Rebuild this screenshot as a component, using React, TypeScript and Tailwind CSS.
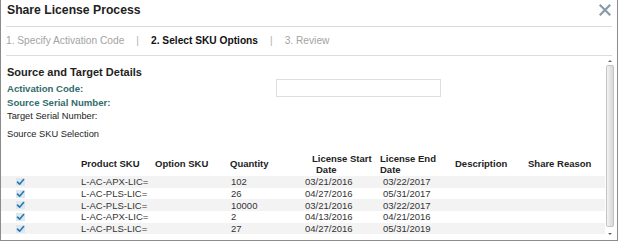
import React from "react";

const rows = [
  { sku: "L-AC-APX-LIC=", qty: "102", start: "03/21/2016", end: "03/22/2017" },
  { sku: "L-AC-PLS-LIC=", qty: "26", start: "04/27/2016", end: "05/31/2017" },
  { sku: "L-AC-PLS-LIC=", qty: "10000", start: "03/21/2016", end: "03/22/2017" },
  { sku: "L-AC-APX-LIC=", qty: "2", start: "04/13/2016", end: "04/21/2016" },
  { sku: "L-AC-PLS-LIC=", qty: "27", start: "04/27/2016", end: "05/31/2019" },
];

function CheckMark() {
  return (
    <svg width="9" height="8" viewBox="0 0 9 8">
      <rect x="0" y="0" width="9" height="8" fill="#dfe6ec" />
      <path d="M1.5 4.2 L3.6 6.2 L7.6 1.6" fill="none" stroke="#1f7ab8" strokeWidth="1.6" strokeLinecap="round" strokeLinejoin="round" />
    </svg>
  );
}

function CloseIcon() {
  return (
    <svg width="12" height="12" viewBox="0 0 12 12">
      <path d="M1.5 1.5 L10.5 10.5 M10.5 1.5 L1.5 10.5" stroke="#8a9aa6" strokeWidth="2.2" strokeLinecap="square" />
    </svg>
  );
}

function Scrollbar() {
  return (
    <div className="flex w-[9px] flex-col items-center pt-[2px] pb-[3px]">
      <div className="flex h-[6px] w-[9px] items-center justify-center">
        <div className="h-0 w-0 border-x-[2px] border-b-[2px] border-x-transparent border-b-[#666]" />
      </div>
      <div className="mt-[1px] flex-1 w-[8px] rounded-[2px] border border-[#c4c4c4] bg-gradient-to-r from-[#f4f4f4] via-[#e4e4e4] to-[#d8d8d8]" />
      <div className="mt-[4px] flex h-[6px] w-[9px] items-center justify-center">
        <div className="h-0 w-0 border-x-[2px] border-t-[2px] border-x-transparent border-t-[#666]" />
      </div>
    </div>
  );
}

export default function App() {
  return (
    <div className="h-[243px] w-[619px] bg-white" style={{ fontFamily: '"Liberation Sans", Arial, sans-serif' }}>
      <div className="flex h-[241px] w-[618px] flex-col border-x border-b border-[#8c8c8c] text-[#222]">
        {/* title */}
        <div className="mx-[5px] flex h-[27px] items-start justify-between border-b border-[#dcdcdc]">
          <div className="pl-[1px] pt-[3px] text-[12.2px] font-bold leading-[15px]">Share License Process</div>
          <div className="pt-[4px] pr-[1px]"><CloseIcon /></div>
        </div>

        {/* steps */}
        <div className="mx-[5px] flex h-[29px] items-center border-b border-[#dcdcdc] text-[10.2px] leading-[14px]">
          <span className="text-[#a3a3a3]">1. Specify Activation Code</span>
          <span className="mx-[12px] text-[#b0b0b0]">|</span>
          <span className="font-bold text-[#111]">2. Select SKU Options</span>
          <span className="mx-[12px] text-[#b0b0b0]">|</span>
          <span className="text-[#a3a3a3]">3. Review</span>
        </div>

        {/* body */}
        <div className="flex flex-1 pr-[3px]">
          <div className="flex-1">
            <div className="pl-[6px]">
              <div className="mt-[9px] h-[14px] text-[11px] font-bold leading-[14px]">Source and Target Details</div>
              <div className="flex h-[18px] items-start">
                <div className="w-[269px] pt-[3px] text-[9.6px] font-bold leading-[14px] text-[#336b6c]">Activation Code:</div>
                <div className="h-[18px] w-[165px] border border-[#dedede] bg-white" />
              </div>
              <div className="h-[12px] text-[9.6px] font-bold leading-[12px] text-[#336b6c]">Source Serial Number:</div>
              <div className="mt-[1px] h-[12px] text-[9.3px] leading-[12px]">Target Serial Number:</div>
              <div className="mt-[6px] h-[12px] text-[9.3px] leading-[12px]">Source SKU Selection</div>
            </div>

            <div className="mt-[12px] text-[9.5px]">
              <div className="flex h-[24px] items-center font-bold leading-[11.5px] text-[#222]">
                <div className="w-[80px] shrink-0" />
                <div className="w-[74px] shrink-0">Product SKU</div>
                <div className="w-[75px] shrink-0">Option SKU</div>
                <div className="w-[74px] shrink-0">Quantity</div>
                <div className="flex w-[76px] shrink-0 flex-col items-start pl-[8px] text-left">
                  <span className="whitespace-nowrap">License Start</span>
                  <span className="ml-[4px]">Date</span>
                </div>
                <div className="flex w-[75px] shrink-0 flex-col items-start text-left">
                  <span className="whitespace-nowrap">License End</span>
                  <span>Date</span>
                </div>
                <div className="w-[73px] shrink-0">Description</div>
                <div className="w-[76px] shrink-0">Share Reason</div>
              </div>
              {rows.map((r, i) => (
                <div key={i} className={`flex h-[11.7px] items-center leading-[11px] text-[#333] ${i % 2 === 0 ? "bg-[#f3f3f4]" : "bg-white"}`}>
                  <div className="w-[80px] shrink-0 pl-[15px]"><CheckMark /></div>
                  <div className="w-[74px] shrink-0">{r.sku}</div>
                  <div className="w-[75px] shrink-0" />
                  <div className="w-[74px] shrink-0 pl-[1px]">{r.qty}</div>
                  <div className="w-[76px] shrink-0 pl-[1px]">{r.start}</div>
                  <div className="w-[75px] shrink-0 pl-[3px]">{r.end}</div>
                  <div className="w-[73px] shrink-0" />
                  <div className="w-[76px] shrink-0" />
                </div>
              ))}
            </div>
          </div>
          <Scrollbar />
        </div>
      </div>
    </div>
  );
}
